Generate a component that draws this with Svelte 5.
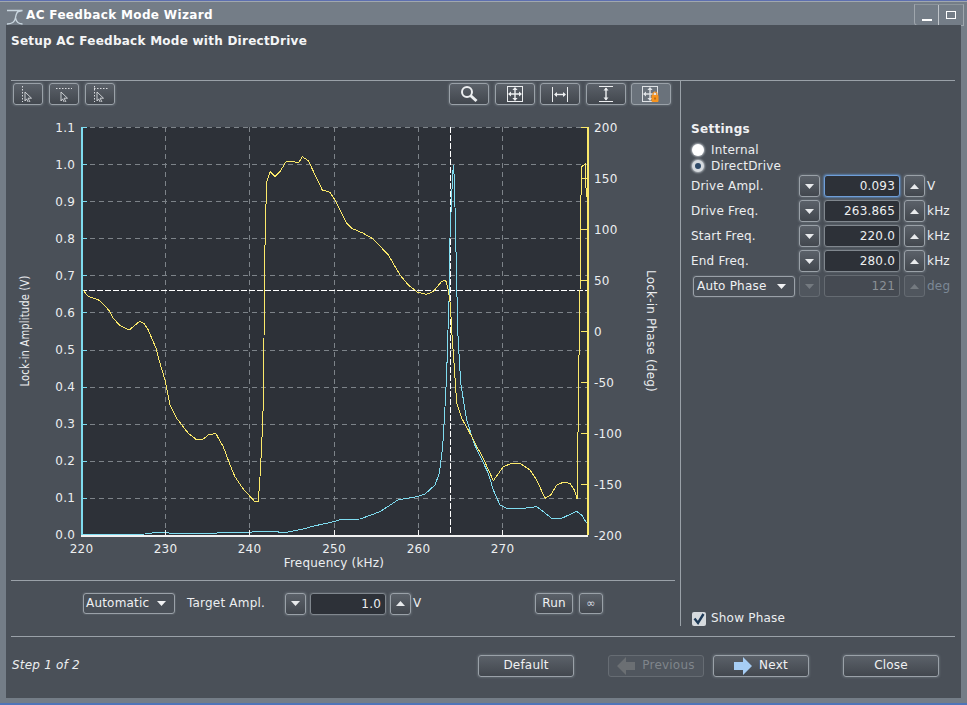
<script>
  const xTicks = [[220,81.5],[230,165.5],[240,249.5],[250,334],[260,418.5],[270,502.5],[280,587]];
  const yTicks = ['1.1','1.0','0.9','0.8','0.7','0.6','0.5','0.4','0.3','0.2','0.1','0.0'].map((t,i)=>[t,127+i*37.09]);
  const rTicks = ['200','150','100','50','0','-50','-100','-150','-200'].map((t,i)=>[t,127+i*51]);
  const yellow = "83.3,290 87.3,295.7 91.7,297.7 98.3,299.7 103.3,304.3 109.3,310.7 113.3,318.3 120,325.7 129.3,330 139.7,321.3 144,323.3 148.3,330 156,348.3 160,363.3 165,380 170,405 176.7,418.3 188.3,433.3 196,439.3 202,440 208.3,435 215.7,433.3 223.3,446.7 230,465 235,476.7 242.7,488.3 254.3,501 258.3,501 260,476.7 261.7,445 263.3,403.3 264,340 264.3,276.7 265.7,215 266.7,181.7 270.3,171.7 275,176.7 280,171.7 286,161.7 290.7,161.3 298.7,162.7 302.3,156.7 308.3,160.7 316.7,178.3 322.3,190 330,192.3 336,201.7 346.7,223.3 351.7,228.3 363.3,233.3 373.3,239 388.3,255 400,275 408.3,285 417.3,292 426,294.3 433.3,291.7 441.7,281.3 445.7,280.3 448.3,290 450,301.7 451,316.7 451.7,330 454,363.3 456.7,403.3 461.7,418.3 468.3,430 475,443.3 483.3,458.3 493.3,480.7 503.3,466.7 511.7,463.3 520,463.3 530,470 536.7,480 545,498.3 550.7,495 556.7,485 563.3,482.3 570,483.3 574.3,490 577.3,499.3 577.7,458.3 578.7,375 580,291.7 580.7,208.3 581.7,166.7 585.3,164 586.3,197";
  const cyan = "82,534.7 145,534 157.3,532.3 173.3,533.3 196.7,533.3 208.3,534 223.3,532.3 250,532.3 256.7,531.3 275,531.3 280,532.3 288.3,532 303.3,529 315,525.7 330,522.7 341.7,519.3 360,519 380,511.7 398.3,499.7 416.7,496.7 425,494 435,485 439.3,473.3 442.7,446.7 445,406.7 446.7,373.3 448,330 449.3,293 450,238 451.3,205 452.7,173 453.7,165 454.7,193 456,251.7 457.3,310 457.7,330 460.7,383.3 466.7,420 474,443.3 488.3,473.3 493.3,490 500,505 506.7,508.3 523.3,508.3 536.7,506.7 543.3,511.7 551.7,518.3 561.7,518.3 576.7,511.3 581.7,515 586.7,523.3";
  const rows = [
    {label:'Drive Ampl.', value:'0.093', unit:'V', focus:true},
    {label:'Drive Freq.', value:'263.865', unit:'kHz'},
    {label:'Start Freq.', value:'220.0', unit:'kHz'},
    {label:'End Freq.', value:'280.0', unit:'kHz'}
  ];
</script>

{#snippet down(dis)}
  <span class="btn step" class:dis><svg width="9" height="5" viewBox="0 0 9 5"><path d="M0 0H9L4.5 5Z" fill="currentColor"/></svg></span>
{/snippet}
{#snippet up(dis)}
  <span class="btn step" class:dis><svg width="9" height="5" viewBox="0 0 9 5"><path d="M0 5H9L4.5 0Z" fill="currentColor"/></svg></span>
{/snippet}
{#snippet caret()}
  <svg class="caret" width="9" height="5" viewBox="0 0 9 5"><path d="M0 0H9L4.5 5Z" fill="currentColor"/></svg>
{/snippet}
{#snippet arrow()}
  <path d="M8 15.500v-9l6.500 6.200h-3.400l1.800 3.600-1.500.7-1.800-3.600z" transform="translate(0 -.5)" fill="#4a5058" stroke="#d8dade" stroke-width=".9"/>
{/snippet}

<div class="window">
  <div class="titlebar">
    <svg class="logo" width="17" height="16" viewBox="0 0 17 16"><path d="M1 1.500H16.500L12.500 2.500C10.500 3 10 6 9.500 8.500 9 12 7 15 1 15M9.500 8.500C10 12 11.500 15 16.500 15" fill="none" stroke="#c9d6df" stroke-width="1.300"/></svg>
    <span class="wintitle">AC Feedback Mode Wizard</span>
    <div class="winbtns">
      <span class="winbtn first"><svg width="10" height="2"><rect width="10" height="2" fill="#fff"/></svg></span>
      <span class="winbtn"><svg width="10" height="8"><rect x=".5" y=".5" width="9" height="7" fill="none" stroke="#fff"/></svg></span>
    </div>
  </div>

  <div class="content">
    <h1 class="heading">Setup AC Feedback Mode with DirectDrive</h1>
    <div class="main">
      <div class="left">
        <div class="toolbar">
          <div class="tools">
            <span class="btn tool small"><svg width="22" height="16" viewBox="0 0 22 16"><path d="M5.500 0v16" stroke="#d8dade" stroke-dasharray="1.500 1.500"/>{@render arrow()}</svg></span>
            <span class="btn tool small"><svg width="22" height="16" viewBox="0 0 22 16"><path d="M3 2.500h16" stroke="#d8dade" stroke-dasharray="1.500 1.500"/>{@render arrow()}</svg></span>
            <span class="btn tool small"><svg width="22" height="16" viewBox="0 0 22 16"><path d="M5 2.500h14M5.500 0v16" stroke="#d8dade" stroke-dasharray="1.500 1.500"/>{@render arrow()}</svg></span>
          </div>
          <div class="tools right">
            <span class="btn tool"><svg width="18" height="18" viewBox="0 0 18 18"><circle cx="7" cy="7" r="5" fill="none" stroke="#eceef0" stroke-width="2"/><path d="M10.500 10.500L16.500 16" stroke="#eceef0" stroke-width="3"/></svg></span>
            <span class="btn tool"><svg width="18" height="18" viewBox="0 0 18 18"><rect x="1.500" y="1.500" width="15" height="15" fill="none" stroke="#eceef0"/><path d="M9 3v12M3 9h12" stroke="#eceef0" stroke-width="1.400"/><path d="M9 2l2.600 3H6.400zM9 16l2.600-3H6.400zM2 9l3-2.600v5.200zM16 9l-3-2.600v5.200z" fill="#eceef0"/></svg></span>
            <span class="btn tool"><svg width="18" height="18" viewBox="0 0 18 18"><path d="M1.500 2v15M16.500 2v15" stroke="#eceef0"/><path d="M4 9.500h10" stroke="#eceef0" stroke-width="1.400"/><path d="M3 9.500l3-2.500v5zM15 9.500l-3-2.500v5z" fill="#eceef0"/></svg></span>
            <span class="btn tool"><svg width="18" height="18" viewBox="0 0 18 18"><path d="M2 1.500h14M2 16.500h14" stroke="#eceef0"/><path d="M9 3v12" stroke="#eceef0" stroke-width="1.400"/><path d="M9 2.500l2.500 3h-5zM9 15.500l2.500-3h-5z" fill="#eceef0"/></svg></span>
            <span class="btn tool active"><svg width="18" height="18" viewBox="0 0 18 18"><rect x=".5" y="1.500" width="15" height="15" fill="none" stroke="#dfe2e5"/><path d="M8 3v12M2 9h12" stroke="#dfe2e5" stroke-width="1.400"/><path d="M8 2l2.600 3H5.400zM8 16l2.600-3H5.400zM1 9l3-2.600v5.200zM15 9l-3-2.600v5.200z" fill="#dfe2e5"/><rect x="9.500" y="10" width="7" height="7" rx="1" fill="#f7931e"/><path d="M11 10.500V9a2 2 0 0 1 4 0v1.500" fill="none" stroke="#f7931e" stroke-width="1.200"/><rect x="12.500" y="12.500" width="1" height="2" fill="#7a4a10"/></svg></span>
          </div>
        </div>

        <svg class="plot" width="665" height="472" viewBox="11 108 665 472" font-family="'DejaVu Sans', sans-serif" font-size="12">
          <rect x="81" y="127" width="506" height="408" fill="#2d3138"/>
          <g stroke="#7d8389" stroke-dasharray="5 4" shape-rendering="crispEdges">
            {#each xTicks.slice(1,6) as t}<line x1={t[1]} x2={t[1]} y1="127" y2="535"/>{/each}
            {#each yTicks.slice(0,11) as t}<line x1="81" x2="587" y1={Math.round(t[1])+.5} y2={Math.round(t[1])+.5}/>{/each}
          </g>
          <g stroke="#fff" stroke-dasharray="6 2" shape-rendering="crispEdges">
            <line x1="450.500" x2="450.500" y1="127" y2="535"/>
            <line x1="81" x2="587" y1="290.500" y2="290.500"/>
          </g>
          <polyline points={cyan} fill="none" stroke="#7fdcf0" stroke-width="1" shape-rendering="crispEdges"/>
          <polyline points={yellow} fill="none" stroke="#fbe96a" stroke-width="1" shape-rendering="crispEdges"/>
          <g shape-rendering="crispEdges">
            <g stroke="#7fdcf0">
              {#each yTicks as t}<line x1="81" x2="87" y1={Math.round(t[1])+.5} y2={Math.round(t[1])+.5}/>{/each}
            </g>
            <g stroke="#fbe96a">
              {#each rTicks as t}<line x1="581" x2="587" y1={Math.round(t[1])+.5} y2={Math.round(t[1])+.5}/>{/each}
            </g>
            <g stroke="#f2f2f2">
              {#each xTicks.slice(1,6) as t}<line x1={t[1]} x2={t[1]} y1="530" y2="535"/>{/each}
            </g>
            <line x1="81.500" x2="81.500" y1="127" y2="535" stroke="#7fdcf0" stroke-width="2"/>
            <line x1="587.500" x2="587.500" y1="127" y2="535" stroke="#fbe96a" stroke-width="2"/>
            <line x1="81" x2="588" y1="535.500" y2="535.500" stroke="#f2f2f2" stroke-width="2"/>
          </g>
          <g fill="#eceef0">
            {#each yTicks as t}<text x="75" y={t[1]+4.500} text-anchor="end">{t[0]}</text>{/each}
            {#each rTicks as t}<text x="594" y={t[1]+4.500}>{t[0]}</text>{/each}
            {#each xTicks.slice(0,6) as t}<text x={t[1]} y="552.500" text-anchor="middle">{t[0]}</text>{/each}
            <text x="334" y="567" text-anchor="middle">Frequency (kHz)</text>
            <text transform="translate(28.500 331) rotate(-90)" text-anchor="middle" textLength="111" lengthAdjust="spacingAndGlyphs">Lock-in Amplitude (V)</text>
            <text transform="translate(647 331) rotate(90)" text-anchor="middle" textLength="122">Lock-in Phase (deg)</text>
          </g>
        </svg>

        <div class="controls">
          <span class="btn select auto"><span>Automatic</span>{@render caret()}</span>
          <span class="lab target">Target Ampl.</span>
          {@render down(false)}
          <span class="input">1.0</span>
          {@render up(false)}
          <span class="unit">V</span>
          <span class="btn run">Run</span>
          <span class="btn inf">∞</span>
        </div>
      </div>

      <div class="side">
        <h2 class="settings">Settings</h2>
        <label class="radio"><span class="dot on"></span>Internal</label>
        <label class="radio"><span class="dot sel"></span>DirectDrive</label>
        <div class="rows">
          {#each rows as r}
            <div class="row">
              <span class="rowlabel">{r.label}</span>
              {@render down(false)}
              <span class="input" class:focus={r.focus}>{r.value}</span>
              {@render up(false)}
              <span class="unit">{r.unit}</span>
            </div>
          {/each}
          <div class="row">
            <span class="btn select phase"><span>Auto Phase</span>{@render caret()}</span>
            {@render down(true)}
            <span class="input dis">121</span>
            {@render up(true)}
            <span class="unit dis">deg</span>
          </div>
        </div>
        <label class="check">
          <span class="box"><svg width="14" height="14" viewBox="0 0 14 14"><path d="M2.500 6.500L6 11 11.500 2" fill="none" stroke="#1e3a57" stroke-width="2.400"/></svg></span>
          Show Phase
        </label>
      </div>
    </div>

    <div class="footer">
      <em class="step-text">Step 1 of 2</em>
      <div class="navs">
        <span class="btn nav default">Default</span>
        <span class="btn nav prev dis"><svg width="18" height="18" viewBox="0 0 18 18"><path d="M0 9L9 0V5H18V13H9V18Z" fill="#6b6f73"/></svg>Previous</span>
        <span class="btn nav next"><svg width="18" height="18" viewBox="0 0 18 18"><path d="M18 9L9 0V5H0V13H9V18Z" fill="#a6cdf4"/></svg>Next</span>
        <span class="btn nav close">Close</span>
      </div>
    </div>
  </div>
</div>

<style>
  :global(body) { margin: 0; background: #4f74b8; }
  .window {
    width: 967px; height: 703px; box-sizing: border-box;
    display: flex; flex-direction: column;
    background: #747d87;
    border-top: 1px solid #5d6fb0;
    font: 12px/15px "DejaVu Sans", sans-serif;
    letter-spacing: .2px;
    color: #eceef0;
  }
  .titlebar {
    height: 24px; flex: none; display: flex; align-items: center;
    padding: 0 3px 0 6px;
    border-top: 1px solid #a0a7ae; box-sizing: border-box;
  }
  .logo { margin: 6px 3px 0 0; overflow: visible; }
  .wintitle { font-weight: bold; font-size: 12px; letter-spacing: .35px; color: #fff; flex: 1; padding-top: 3px; }
  .winbtns { display: flex; height: 20px; margin-top: 3px; border: 1px solid #9fa6ad; border-radius: 0 0 0 4px; border-top-color: #8d959c; }
  .winbtn { width: 24px; display: flex; align-items: center; justify-content: center; }
  .winbtn.first { border-right: 1px solid #bfc4c9; align-items: flex-end; padding-bottom: 4px; box-sizing: border-box; }
  .content {
    flex: 1; min-height: 0; margin: 0 6px 5px; padding: 0 6px 0 5px;
    background: #4a5058; display: flex; flex-direction: column;
  }
  .heading { margin: 0; padding-top: 8px; box-sizing: border-box; font-size: 12px; line-height: 16px; font-weight: bold; letter-spacing: .25px; color: #f4f5f6; border-bottom: 1px solid #9aa1a8; height: 56px; }
  .main { display: flex; height: 556px; flex: none; border-bottom: 1px solid #9aa1a8; padding-bottom: 10px; box-sizing: border-box; }
  .left { width: 670px; flex: none; border-right: 1px solid #9aa1a8; box-sizing: border-box; padding-right: 5px; display: flex; flex-direction: column; }
  .toolbar { display: flex; justify-content: space-between; padding: 2px 4px 0 2px; height: 27px; box-sizing: border-box; }
  .tools { display: flex; gap: 6px; }
  .tools.right { gap: 5.5px; }
  .btn {
    display: inline-flex; align-items: center; justify-content: center; box-sizing: border-box;
    border: 1px solid #9aa1a8; border-radius: 3px;
    background: linear-gradient(#5b6169, #42474e);
    box-shadow: 0 0 2px 1px #5f666e;
    color: #f0f1f3;
  }
  .tool { width: 40px; height: 22px; }
  .tool.small { width: 30px; }
  .tool.active { background: #6a727b; }
  .plot { display: block; flex: none; height: 472px; }
  .controls {
    flex: 1; display: flex; align-items: center; height: 46px;
    border-top: 1px solid #9aa1a8; padding: 0 0 0 72px; box-sizing: border-box;
  }
  .select { height: 21px; justify-content: space-between; padding: 0 8px 0 2px; background: #4a5058; box-shadow: 0 0 1px 1px #575d65; }
  .auto { width: 92px; }
  .target { margin-left: 12px; width: 98px; }
  .step { width: 21px; height: 22px; color: #e8eaec; }
  .step.dis { color: #747a80; border-color: #656b72; box-shadow: none; background: #50565e; }
  .input {
    width: 76px; height: 22px; margin: 0 4px; box-sizing: border-box; padding: 0 4px;
    background: #2d3138; border: 1px solid #80878e; border-radius: 3px;
    text-align: right; line-height: 20px; box-shadow: 0 0 1px 1px #575d65;
  }
  .input.focus { border-color: #6f9ed8; box-shadow: 0 0 2px 1px #5c7ea8; }
  .input.dis { background: #454a52; color: #8b9096; border-color: #656b72; box-shadow: none; }
  .unit { margin-left: 2px; }
  .unit.dis { color: #7c8896; }
  .controls .unit { width: 0; }
  .run { width: 38px; height: 21px; margin-left: 122px; }
  .inf { width: 24px; height: 21px; margin-left: 6px; color: #d8dde2; font-size: 11px; }
  .side { flex: 1; padding: 40px 0 0 10px; position: relative; display: flex; flex-direction: column; }
  .settings { margin: 0 0 5px; font-size: 12px; line-height: 16px; font-weight: bold; letter-spacing: .3px; color: #f0f1f3; }
  .radio { display: flex; align-items: center; gap: 7px; height: 16px; padding-left: 1px; }
  .dot { width: 12px; height: 12px; border-radius: 50%; background: #fff; box-shadow: 0 0 2px 1px #aab0b6; box-sizing: border-box; }
  .dot.sel { border: 3px solid #d6dade; background: #2f4a68; }
  .rows { display: flex; flex-direction: column; gap: 3px; margin-top: 1px; }
  .row { display: flex; align-items: center; height: 22px; }
  .rowlabel { width: 108px; }
  .phase { width: 102px; margin: 0 4px 0 2px; height: 21px; padding: 0 8px 0 3px; }
  .check { display: flex; align-items: center; gap: 5px; margin-top: auto; height: 15px; padding-left: 1px; }
  .box { width: 14px; height: 14px; border-radius: 2px; background: #d6dade; display: block; }
  .footer { flex: 1; display: flex; align-items: center; padding: 0 0 4px 1px; }
  .step-text { font-size: 12px; width: 466px; }
  .navs { display: flex; }
  .nav { width: 96px; height: 22px; gap: 7px; }
  .prev { margin-left: 34px; }
  .next { margin-left: 9px; }
  .close { margin-left: 34px; }
  .dis.nav { color: #7f858b; border-color: #666c73; box-shadow: none; background: #50565e; }
</style>
